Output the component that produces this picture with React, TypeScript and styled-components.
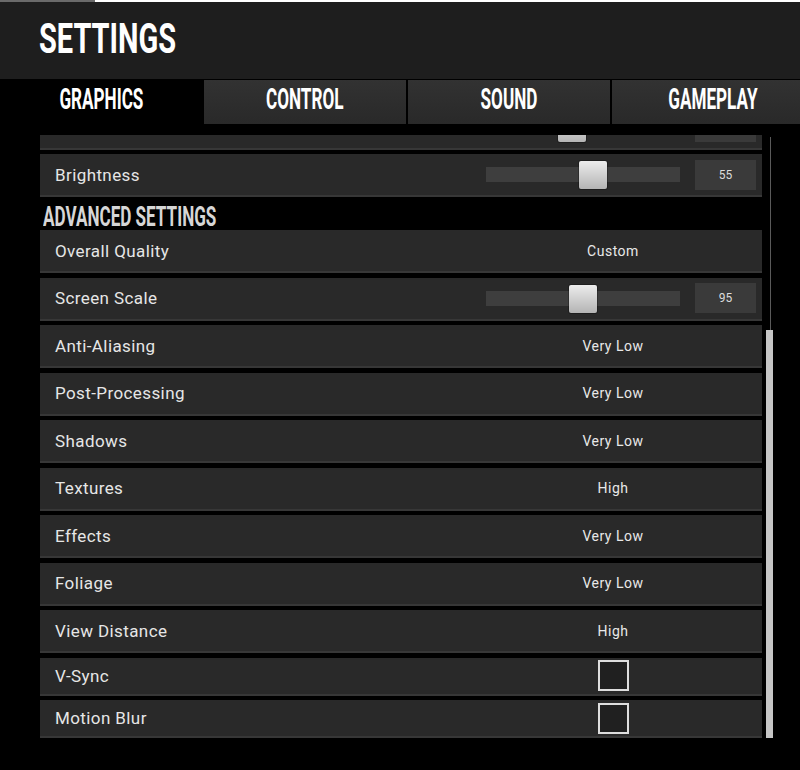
import React from 'react';
import styled, { createGlobalStyle } from 'styled-components';

type Item =
  | { kind: 'slider'; label: string; value: number; min: number; max: number }
  | { kind: 'select'; label: string; value: string }
  | { kind: 'toggle'; label: string; checked: boolean }
  | { kind: 'section'; label: string };

const items: Item[] = [
  { kind: 'slider', label: 'FPS Camera FOV', value: 90, min: 80, max: 103 },
  { kind: 'slider', label: 'Brightness', value: 55, min: 0, max: 98 },
  { kind: 'section', label: 'ADVANCED SETTINGS' },
  { kind: 'select', label: 'Overall Quality', value: 'Custom' },
  { kind: 'slider', label: 'Screen Scale', value: 95, min: 70, max: 120 },
  { kind: 'select', label: 'Anti-Aliasing', value: 'Very Low' },
  { kind: 'select', label: 'Post-Processing', value: 'Very Low' },
  { kind: 'select', label: 'Shadows', value: 'Very Low' },
  { kind: 'select', label: 'Textures', value: 'High' },
  { kind: 'select', label: 'Effects', value: 'Very Low' },
  { kind: 'select', label: 'Foliage', value: 'Very Low' },
  { kind: 'select', label: 'View Distance', value: 'High' },
  { kind: 'toggle', label: 'V-Sync', checked: false },
  { kind: 'toggle', label: 'Motion Blur', checked: false },
];

const tabs = ['GRAPHICS', 'CONTROL', 'SOUND', 'GAMEPLAY'];

const TRACK_WIDTH = 194;
const THUMB_SIZE = 28;

export default function App() {
  return (
    <>
      <GlobalStyle />
      <Page>
        <TopLine />
        <Header>
          <Title>SETTINGS</Title>
        </Header>
        <TabBar>
          {tabs.map((t, i) => (
            <Tab key={t} $active={i === 0}>
              <TabLabel>{t}</TabLabel>
            </Tab>
          ))}
        </TabBar>
        <Content>
          <Viewport>
            <List>
              {items.map((item) => {
                if (item.kind === 'section') {
                  return (
                    <SectionTitle key={item.label}>
                      <SectionText>{item.label}</SectionText>
                    </SectionTitle>
                  );
                }
                return (
                  <Row key={item.label} $compact={item.kind === 'toggle'}>
                    <Label>{item.label}</Label>
                    {item.kind === 'select' && <Value>{item.value}</Value>}
                    {item.kind === 'toggle' && (
                      <Value>
                        <Checkbox $checked={item.checked} />
                      </Value>
                    )}
                    {item.kind === 'slider' && (
                      <SliderGroup>
                        <Track>
                          <Thumb
                            style={{
                              left: Math.round(
                                ((item.value - item.min) / (item.max - item.min)) *
                                  (TRACK_WIDTH - THUMB_SIZE)
                              ),
                            }}
                          />
                        </Track>
                        <NumberBox>{item.value}</NumberBox>
                      </SliderGroup>
                    )}
                  </Row>
                );
              })}
            </List>
          </Viewport>
          <Scrollbar>
            <ScrollThumb />
          </Scrollbar>
        </Content>
      </Page>
    </>
  );
}

const GlobalStyle = createGlobalStyle`
  html, body {
    margin: 0;
    padding: 0;
    background: #000;
  }
  body {
    font-family: Roboto, 'Noto Sans', sans-serif;
    color: #e8e8e8;
  }
  * {
    box-sizing: border-box;
  }
`;

const Page = styled.div`
  width: 800px;
  height: 770px;
  background: #000;
  overflow: hidden;
`;

const TopLine = styled.div`
  height: 2px;
  background: linear-gradient(to right, #6a6a6a 0, #6a6a6a 95px, #fff 95px);
`;

const Header = styled.div`
  height: 77px;
  background: #1e1e1e;
  display: flex;
  align-items: center;
  padding: 0 0 4px 39px;
`;

const Title = styled.h1`
  margin: 0;
  font-family: Roboto, sans-serif;
  font-weight: 700;
  font-size: 42px;
  line-height: 1;
  color: #fff;
  display: inline-block;
  transform: scaleX(0.69);
  transform-origin: left center;
`;

const TabBar = styled.div`
  margin-top: 1px;
  height: 45px;
  display: flex;
  gap: 2px;
  overflow: hidden;
  border-bottom: 1px solid #000;
`;

const Tab = styled.div<{ $active?: boolean }>`
  flex: 0 0 202px;
  display: flex;
  align-items: center;
  justify-content: center;
  padding-bottom: 4px;
  background: ${(p) => (p.$active ? '#000' : 'linear-gradient(#323232, #292929)')};
`;

const TabLabel = styled.span`
  font-family: Roboto, sans-serif;
  font-weight: 700;
  font-size: 29.5px;
  line-height: 1;
  color: #fff;
  display: inline-block;
  transform: scaleX(0.58);
`;

const Content = styled.div`
  display: flex;
  padding: 10px 0 0 40px;
  height: 645px;
`;

const Viewport = styled.div`
  width: 722px;
  height: 603px;
  overflow: hidden;
`;

const List = styled.div`
  display: flex;
  flex-direction: column;
  gap: 4.5px;
  margin-top: -28.5px;
`;

const Row = styled.div<{ $compact?: boolean }>`
  flex: 0 0 auto;
  display: grid;
  grid-template-columns: 1fr 270px;
  align-items: center;
  height: ${(p) => (p.$compact ? 38 : 43)}px;
  padding: 0 6px 0 15px;
  background: #292929;
  border-bottom: 2px solid #373737;
`;

const Label = styled.span`
  font-size: 17px;
  letter-spacing: 0.4px;
  color: #e6e6e6;
`;

const Value = styled.div`
  display: flex;
  justify-content: center;
  padding-right: 16px;
  font-size: 14px;
  letter-spacing: 0.5px;
  color: #e8e8e8;
`;

const SectionTitle = styled.div`
  flex: 0 0 auto;
  height: 24px;
  padding-left: 3px;
`;

const SectionText = styled.span`
  font-family: Roboto, sans-serif;
  font-weight: 700;
  font-size: 28px;
  line-height: 29px;
  color: #d6d6d6;
  display: inline-block;
  transform: scaleX(0.61);
  transform-origin: left center;
  white-space: nowrap;
`;

const SliderGroup = styled.div`
  display: flex;
  align-items: center;
  gap: 15px;
`;

const Track = styled.div`
  position: relative;
  width: ${TRACK_WIDTH}px;
  height: 15px;
  background: #3e3e3e;
`;

const Thumb = styled.div`
  position: absolute;
  top: -6px;
  width: ${THUMB_SIZE}px;
  height: ${THUMB_SIZE}px;
  border-radius: 2px;
  background: linear-gradient(#ececec, #b4b4b4);
  box-shadow: 0 0 0 1px rgba(0, 0, 0, 0.25);
`;

const NumberBox = styled.div`
  width: 61px;
  height: 30px;
  display: flex;
  align-items: center;
  justify-content: center;
  background: #3a3a3a;
  font-size: 12px;
  color: #dcdcdc;
`;

const Checkbox = styled.div<{ $checked?: boolean }>`
  width: 31px;
  height: 31px;
  border: 2px solid #dedede;
  background: ${(p) => (p.$checked ? '#dedede' : '#202020')};
`;

const Scrollbar = styled.div`
  width: 7px;
  height: 601px;
  margin: 2px 0 0 4px;
  display: flex;
  flex-direction: column;
  background: linear-gradient(to right, transparent 4px, #5a5a5a 4px, #5a5a5a 5px, transparent 5px);
`;

const ScrollThumb = styled.div`
  margin-top: auto;
  height: 408px;
  background: #c6c6c6;
`;
